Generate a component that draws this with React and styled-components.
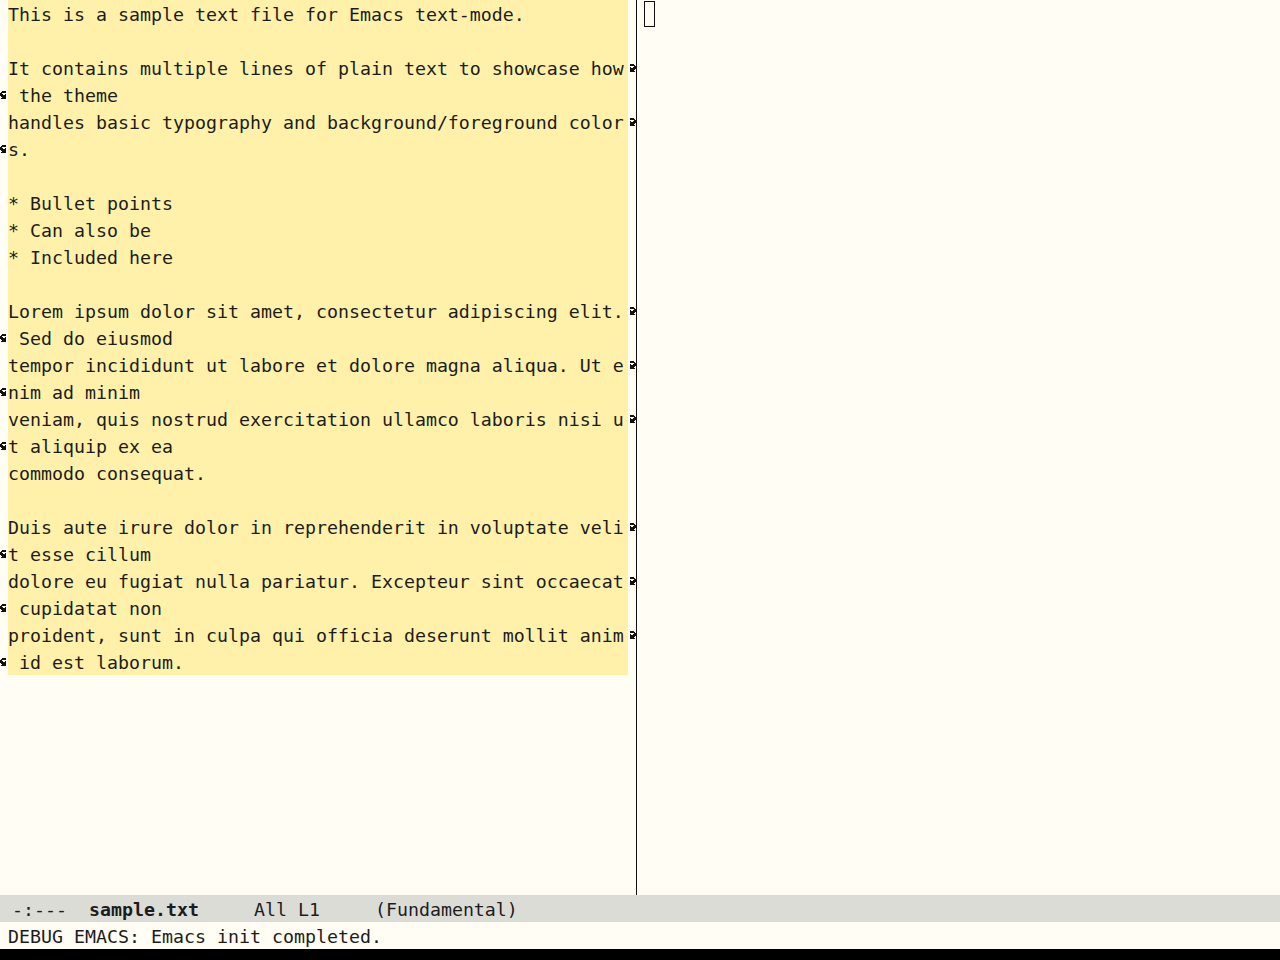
import React from "react";
import styled, { createGlobalStyle } from "styled-components";

const GlobalStyle = createGlobalStyle`
  html, body {
    margin: 0;
    padding: 0;
    background: #fffdf4;
  }
`;

const Frame = styled.div`
  width: 1280px;
  height: 960px;
  display: grid;
  grid-template-rows: 895px 27px 27px 11px;
  background: #fffdf4;
  color: #1c1c1c;
  font-family: "DejaVu Sans Mono", "Liberation Mono", monospace;
  font-size: 18.27px;
  line-height: 27px;
  overflow: hidden;
`;

const Windows = styled.div`
  display: flex;
  min-height: 0;
`;

const LeftWindow = styled.div`
  width: 636px;
  display: flex;
  flex-direction: column;
`;

const Divider = styled.div`
  width: 1px;
  background: #111;
`;

const RightWindow = styled.div`
  flex: 1;
  padding-left: 7px;
`;

const Line = styled.div`
  display: flex;
  height: 27px;
`;

const Fringe = styled.div`
  width: 8px;
  display: flex;
  align-items: center;
  justify-content: ${(p) => (p.$side === "left" ? "flex-start" : "flex-end")};
`;

const Text = styled.div`
  width: 620px;
  height: 27px;
  box-sizing: border-box;
  padding-top: 2px;
  line-height: 25px;
  white-space: pre;
  background: #fff1a9;
`;

const Cursor = styled.div`
  width: 9px;
  height: 24px;
  margin-top: 1px;
  border: 1px solid #111;
`;

const ModeLine = styled.div`
  background: #dcdcd7;
  padding: 2px 0 0 12px;
  line-height: 25px;
  white-space: pre;
`;

const BufferName = styled.span`
  font-weight: bold;
`;

const Echo = styled.div`
  padding: 2px 0 0 8px;
  line-height: 25px;
  white-space: pre;
`;

const Bottom = styled.div`
  background: #000;
`;

const rightCurly = [0x3c, 0x3e, 0x03, 0x27, 0x3f, 0x3e, 0x3c, 0x3e];
const leftCurly = [0x3c, 0x7c, 0xc0, 0xe4, 0xfc, 0x7c, 0x3c, 0x7c];

function FringeBitmap({ bits }) {
  const rects = [];
  bits.forEach((row, y) => {
    for (let x = 0; x < 8; x++) {
      if (row & (0x80 >> x)) rects.push(<rect key={`${x}-${y}`} x={x} y={y} width="1" height="1" />);
    }
  });
  return (
    <svg width="8" height="8" viewBox="0 0 8 8" fill="#111" shapeRendering="crispEdges">
      {rects}
    </svg>
  );
}

// [text, wraps onto next line]
const lines = [
  ["This is a sample text file for Emacs text-mode.", false],
  ["", false],
  ["It contains multiple lines of plain text to showcase how", true],
  [" the theme", false],
  ["handles basic typography and background/foreground color", true],
  ["s.", false],
  ["", false],
  ["* Bullet points", false],
  ["* Can also be", false],
  ["* Included here", false],
  ["", false],
  ["Lorem ipsum dolor sit amet, consectetur adipiscing elit.", true],
  [" Sed do eiusmod", false],
  ["tempor incididunt ut labore et dolore magna aliqua. Ut e", true],
  ["nim ad minim", false],
  ["veniam, quis nostrud exercitation ullamco laboris nisi u", true],
  ["t aliquip ex ea", false],
  ["commodo consequat.", false],
  ["", false],
  ["Duis aute irure dolor in reprehenderit in voluptate veli", true],
  ["t esse cillum", false],
  ["dolore eu fugiat nulla pariatur. Excepteur sint occaecat", true],
  [" cupidatat non", false],
  ["proident, sunt in culpa qui officia deserunt mollit anim", true],
  [" id est laborum.", false],
];

export default function App() {
  return (
    <>
      <GlobalStyle />
      <Frame>
        <Windows>
          <LeftWindow>
            {lines.map(([text, wraps], i) => {
              const continued = i > 0 && lines[i - 1][1];
              return (
                <Line key={i}>
                  <Fringe $side="left">{continued && <FringeBitmap bits={leftCurly} />}</Fringe>
                  <Text>{text}</Text>
                  <Fringe $side="right">{wraps && <FringeBitmap bits={rightCurly} />}</Fringe>
                </Line>
              );
            })}
          </LeftWindow>
          <Divider />
          <RightWindow>
            <Cursor />
          </RightWindow>
        </Windows>
        <ModeLine>
          {"-:---  "}
          <BufferName>sample.txt</BufferName>
          {"     All L1     (Fundamental)"}
        </ModeLine>
        <Echo>DEBUG EMACS: Emacs init completed.</Echo>
        <Bottom />
      </Frame>
    </>
  );
}
